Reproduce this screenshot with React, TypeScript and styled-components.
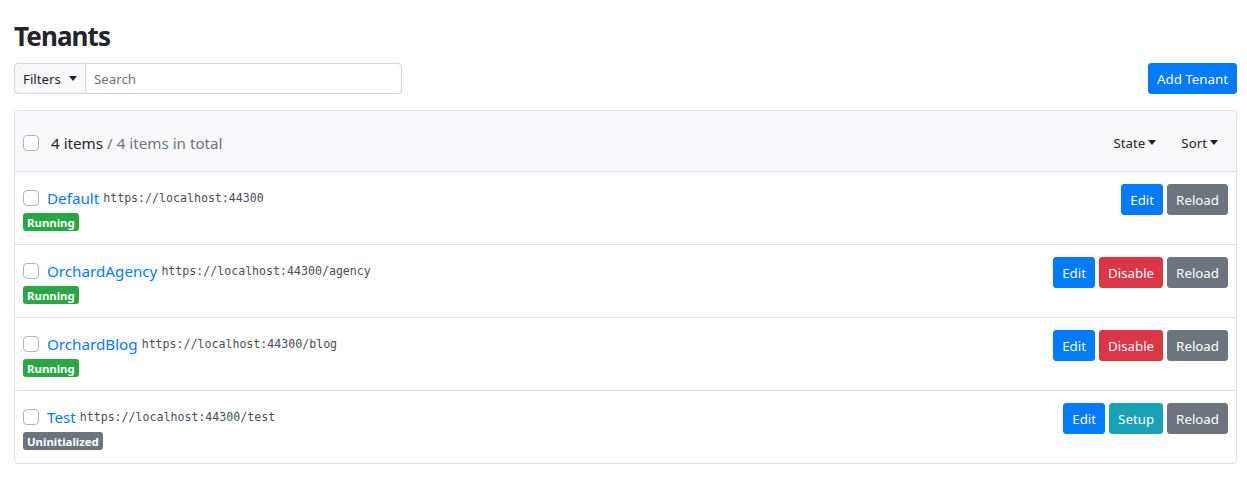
import styled, { createGlobalStyle } from 'styled-components';

const GlobalStyle = createGlobalStyle`
  body {
    margin: 0;
    background: #fff;
    font-family: 'Segoe UI', 'Noto Sans', sans-serif;
    color: #212529;
  }
`;

type Tenant = {
  name: string;
  url: string;
  state: 'Running' | 'Uninitialized';
  actions: ('Edit' | 'Disable' | 'Setup' | 'Reload')[];
};

const tenants: Tenant[] = [
  { name: 'Default', url: 'https://localhost:44300', state: 'Running', actions: ['Edit', 'Reload'] },
  { name: 'OrchardAgency', url: 'https://localhost:44300/agency', state: 'Running', actions: ['Edit', 'Disable', 'Reload'] },
  { name: 'OrchardBlog', url: 'https://localhost:44300/blog', state: 'Running', actions: ['Edit', 'Disable', 'Reload'] },
  { name: 'Test', url: 'https://localhost:44300/test', state: 'Uninitialized', actions: ['Edit', 'Setup', 'Reload'] },
];

const colors: Record<string, string> = {
  Edit: '#007bff',
  Disable: '#dc3545',
  Setup: '#17a2b8',
  Reload: '#6c757d',
};

const App = () => {
  return (
    <Page>
      <GlobalStyle />
      <Title>Tenants</Title>
      <Toolbar>
        <InputGroup>
          <FilterButton>
            Filters <Caret />
          </FilterButton>
          <SearchInput placeholder="Search" />
        </InputGroup>
        <Button $color="#007bff">Add Tenant</Button>
      </Toolbar>
      <Card>
        <Header>
          <Check />
          <Count>
            4 items <Muted>/ 4 items in total</Muted>
          </Count>
          <HeaderMenus>
            <MenuToggle>
              State<Caret />
            </MenuToggle>
            <MenuToggle>
              Sort<Caret />
            </MenuToggle>
          </HeaderMenus>
        </Header>
        {tenants.map((t) => (
          <Row key={t.name}>
            <RowMain>
              <RowTitle>
                <Check />
                <Name href="#">{t.name}</Name>
                <Url>{t.url}</Url>
              </RowTitle>
              <Badge $color={t.state === 'Running' ? '#28a745' : '#6c757d'}>{t.state}</Badge>
            </RowMain>
            <Actions>
              {t.actions.map((a) => (
                <Button key={a} $color={colors[a]}>
                  {a}
                </Button>
              ))}
            </Actions>
          </Row>
        ))}
      </Card>
    </Page>
  );
};

export default App;

const Page = styled.div`
  padding: 18px 10px 16px 14px;
`;

const Title = styled.h1`
  margin: 0 0 8px;
  font-size: 26px;
  font-weight: 700;
  line-height: 37px;
  letter-spacing: -0.9px;
  color: #212529;
`;

const Toolbar = styled.div`
  display: flex;
  justify-content: space-between;
  align-items: center;
  margin-bottom: 16px;
`;

const InputGroup = styled.div`
  display: flex;
  width: 388px;
  height: 31px;
`;

const FilterButton = styled.div`
  display: flex;
  align-items: center;
  gap: 5px;
  padding: 0 8px;
  font-size: 13.3px;
  color: #212529;
  background: #f8f9fa;
  border: 1px solid #ced4da;
  border-radius: 4px 0 0 4px;
  box-sizing: border-box;
`;

const SearchInput = styled.input`
  flex: 1;
  min-width: 0;
  box-sizing: border-box;
  height: 31px;
  padding: 0 8px;
  font-family: inherit;
  font-size: 13.3px;
  border: 1px solid #ced4da;
  border-left: none;
  border-radius: 0 4px 4px 0;
  outline: none;
  &::placeholder {
    color: #6c757d;
  }
`;

const Caret = styled.span`
  display: inline-block;
  width: 0;
  height: 0;
  margin-left: 3px;
  vertical-align: 3px;
  border-top: 5px solid #212529;
  border-left: 4.5px solid transparent;
  border-right: 4.5px solid transparent;
`;

const Button = styled.button<{ $color: string }>`
  height: 31px;
  padding: 0 8px;
  font-family: inherit;
  font-size: 13.3px;
  color: #fff;
  background: ${(p) => p.$color};
  border: 1px solid ${(p) => p.$color};
  border-radius: 3px;
  cursor: pointer;
`;

const Card = styled.div`
  border: 1px solid #dee2e6;
  border-radius: 4px;
  overflow: hidden;
`;

const Header = styled.div`
  display: flex;
  align-items: center;
  padding: 4px 18px 0 8px;
  box-sizing: border-box;
  height: 61px;
  background: #f8f9fa;
  border-bottom: 1px solid #dee2e6;
`;

const Check = styled.span`
  display: inline-block;
  flex-shrink: 0;
  width: 14px;
  height: 14px;
  border: 1px solid #adb5bd;
  border-radius: 4px;
  background: #fff;
`;

const Count = styled.div`
  margin-left: 12px;
  font-size: 15.2px;
  color: #212529;
`;

const Muted = styled.span`
  color: #6c757d;
`;

const HeaderMenus = styled.div`
  display: flex;
  gap: 25px;
  margin-left: auto;
`;

const MenuToggle = styled.div`
  font-size: 13.3px;
  color: #212529;
`;

const Row = styled.div`
  display: flex;
  justify-content: space-between;
  align-items: flex-start;
  height: 73px;
  padding: 11px 8px 0;
  box-sizing: border-box;
  border-bottom: 1px solid #dee2e6;
  &:last-child {
    border-bottom: none;
    height: 72px;
  }
`;

const RowMain = styled.div`
  display: flex;
  flex-direction: column;
  gap: 5px;
`;

const RowTitle = styled.div`
  display: flex;
  align-items: center;
  margin-top: 5px;
`;

const Name = styled.a`
  margin-left: 8px;
  font-size: 15.2px;
  color: #007bff;
  text-decoration: none;
`;

const Url = styled.code`
  margin-left: 4px;
  font-family: 'DejaVu Sans Mono', monospace;
  font-size: 11.6px;
  color: #495057;
`;

const Badge = styled.span<{ $color: string }>`
  align-self: flex-start;
  padding: 2px 4px 1px;
  font-size: 11.4px;
  font-weight: 700;
  line-height: 15px;
  color: #fff;
  background: ${(p) => p.$color};
  border-radius: 3px;
`;

const Actions = styled.div`
  display: flex;
  gap: 4px;
  margin-top: 1px;
`;
